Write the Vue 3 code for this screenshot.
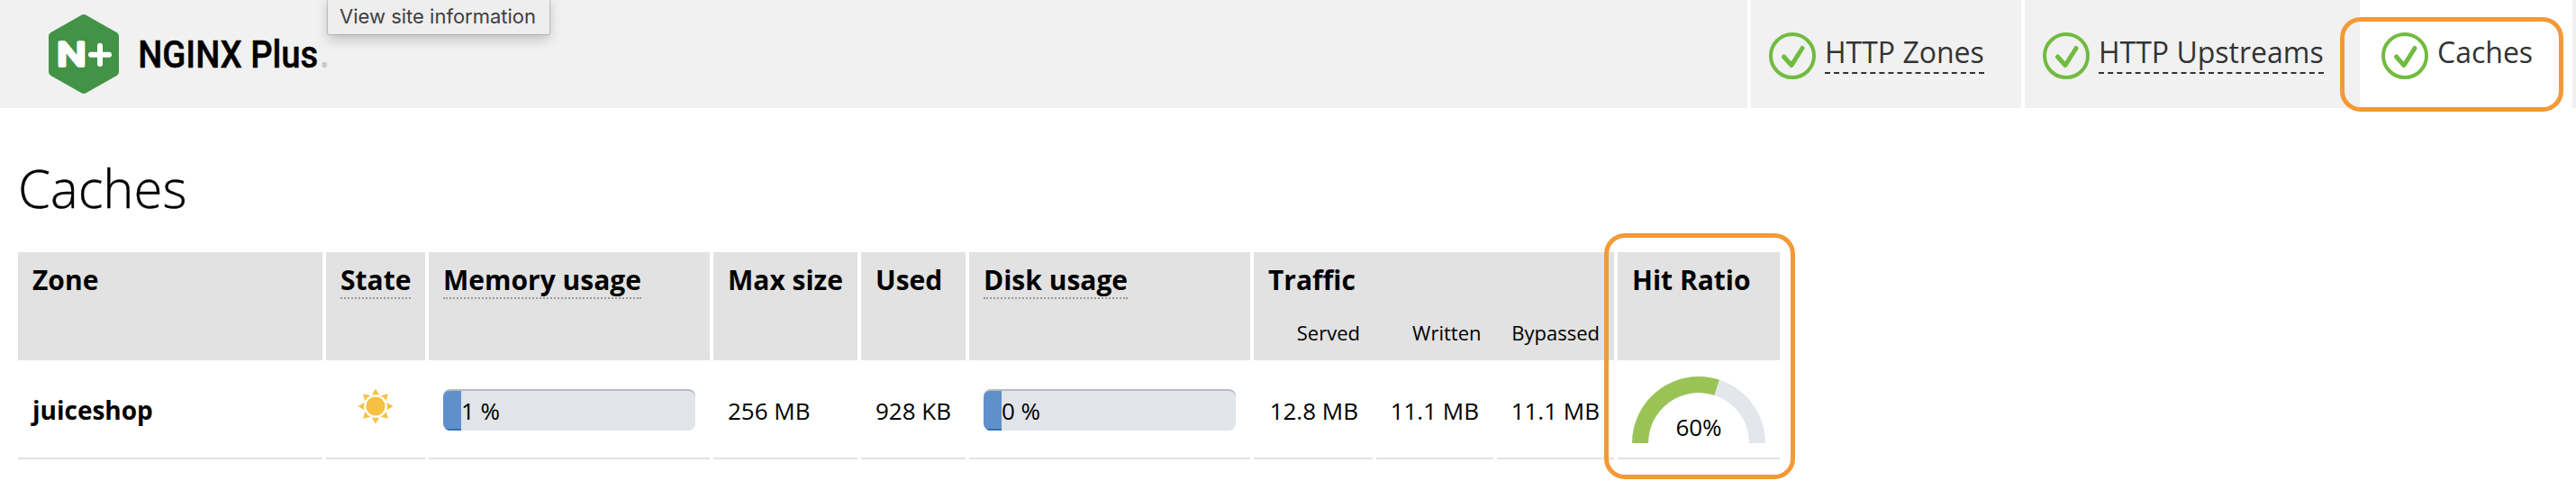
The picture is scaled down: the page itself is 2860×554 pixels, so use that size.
<script setup>
const tabs = [
  { label: 'HTTP Zones', kind: 'zones' },
  { label: 'HTTP Upstreams', kind: 'upstreams' },
  { label: 'Caches', kind: 'active' },
]
const rays = [0, 45, 90, 135, 180, 225, 270, 315]
const hitRatio = 60
const angle = Math.PI * (1 - hitRatio / 100)
const point = (r) => `${(74 + r * Math.cos(angle)).toFixed(2)} ${(74 - r * Math.sin(angle)).toFixed(2)}`
const arc = `M0 74A74 74 0 0 1 ${point(74)}L${point(56)}A56 56 0 0 0 18 74Z`
</script>

<template>
  <div class="page">
    <header class="bar">
      <div class="brand">
        <svg class="mark" width="78" height="88" viewBox="0 0 78 88">
          <path d="M36.500 0.700Q39 -0.500 41.500 0.700L75.500 20Q78 21.500 78 24V64Q78 66.500 75.500 68L41.500 87.300Q39 88.500 36.500 87.300L2.500 68Q0 66.500 0 64V24Q0 21.500 2.500 20Z" fill="#429345" />
          <text class="mark-letter" x="9" y="57" textLength="32.800" lengthAdjust="spacingAndGlyphs">N</text>
          <path d="M47 44.700H67M57 34.700V55" stroke="#fff" stroke-width="6" stroke-linecap="round" />
        </svg>
        <svg class="wordmark" width="230" height="60" viewBox="0 0 230 60">
          <text class="word" x="5.200" y="45" textLength="200" lengthAdjust="spacingAndGlyphs">NGINX Plus</text>
          <text class="reg" x="209" y="45">®</text>
        </svg>
      </div>
      <nav class="tabs">
        <a v-for="tab in tabs" :key="tab.label" class="tab" :class="tab.kind">
          <svg width="52" height="52" viewBox="0 0 52 52" fill="none" stroke="#71bb40">
            <circle cx="26" cy="26" r="24" stroke-width="4" />
            <path d="M16.500 27L25 36.500L37 17.500" stroke-width="5" stroke-linecap="round" stroke-linejoin="round" />
          </svg>
          <span class="tab-label">{{ tab.label }}</span>
        </a>
      </nav>
    </header>
    <div class="tooltip">View site information</div>
    <h1>Caches</h1>
    <div class="table">
      <div class="th">Zone</div>
      <div class="th"><span class="hint">State</span></div>
      <div class="th"><span class="hint">Memory usage</span></div>
      <div class="th">Max size</div>
      <div class="th">Used</div>
      <div class="th"><span class="hint">Disk usage</span></div>
      <div class="th traffic">
        <div>Traffic</div>
        <div class="sub"><span>Served</span><span>Written</span><span>Bypassed</span></div>
      </div>
      <div class="th">Hit Ratio</div>

      <div class="td name">juiceshop</div>
      <div class="td state">
        <svg width="40" height="40" viewBox="-20 -20 40 40" fill="#f6c143">
          <circle r="10.600" />
          <path v-for="r in rays" :key="r" d="M0 -19.600L4.300 -12.300Q0 -13.800 -4.300 -12.300Z" :transform="`rotate(${r})`" />
        </svg>
      </div>
      <div class="td meter"><div class="track"><div class="fill"></div><span>1 %</span></div></div>
      <div class="td">256 MB</div>
      <div class="td">928 KB</div>
      <div class="td meter"><div class="track"><div class="fill"></div><span>0 %</span></div></div>
      <div class="td num">12.8 MB</div>
      <div class="td num">11.1 MB</div>
      <div class="td num">11.1 MB</div>
      <div class="td ratio">
        <svg width="148" height="74" viewBox="0 0 148 74">
          <path d="M0 74A74 74 0 0 1 148 74H130A56 56 0 0 0 18 74Z" fill="#e3e6eb" />
          <path :d="arc" fill="#9ac356" />
          <text x="74" y="66" text-anchor="middle" class="ratio-text">{{ hitRatio }}%</text>
        </svg>
      </div>
    </div>
    <div class="callout callout-tab"></div>
    <div class="callout callout-ratio"></div>
  </div>
</template>

<style>
body { margin: 0; background: #fff; }
</style>

<style scoped>
.page {
  position: relative;
  width: 2860px;
  height: 554px;
  overflow: hidden;
  background: #fff;
  color: #000;
  font-family: "Open Sans", "Noto Sans", sans-serif;
}
.bar {
  display: flex;
  justify-content: space-between;
  height: 120px;
  background: #f1f1f1;
}
.brand { display: flex; align-items: flex-start; padding: 16px 0 0 54px; }
.wordmark { margin: 14px 0 0 16px; overflow: visible; }
.mark-letter {
  font: 400 36.500px Roboto, sans-serif;
  fill: #fff;
  stroke: #fff;
  stroke-width: 3.600px;
  stroke-linejoin: round;
}
.word { font: 500 42px Roboto, sans-serif; fill: #000; stroke: #000; stroke-width: 0.5px; }
.reg { font: 8px Roboto, sans-serif; fill: #999; }
.tabs { display: flex; padding-right: 4px; }
.tab {
  box-sizing: border-box;
  display: flex;
  align-items: flex-start;
  gap: 10px;
  height: 120px;
  padding: 36px 0 0 20px;
  border-left: 4px solid #fff;
}
.zones { width: 304px; }
.upstreams { width: 376px; }
.active { width: 236px; background: #fff; }
.tab-label {
  height: 44px;
  border-bottom: 2px dashed #333;
  color: #333;
  font-size: 32px;
  line-height: 43px;
  white-space: nowrap;
}
.active .tab-label { border-bottom: 0; }
.tooltip {
  position: absolute;
  top: -4px;
  left: 364px;
  box-sizing: border-box;
  width: 246px;
  height: 42px;
  padding-left: 13px;
  border-radius: 2px;
  background: #eee;
  box-shadow: 0 0 1px 1px rgba(0, 0, 0, 0.16), 0 6px 14px rgba(0, 0, 0, 0.2);
  color: #404040;
  font: 22px/44px Inter, sans-serif;
  white-space: nowrap;
}
h1 {
  margin: 50px 0 0 20px;
  height: 110px;
  font-size: 58px;
  font-weight: 300;
  line-height: 78px;
  -webkit-text-stroke: 0.4px #000;
}
.table {
  display: grid;
  grid-template-columns: 338px 110px 312px 160px 116px 312px 132px 130px 130px 180px;
  grid-template-rows: 120px 110px;
  column-gap: 4px;
  margin-left: 20px;
  width: max-content;
}
.th {
  padding: 10px 16px 0;
  background: #e2e2e2;
  font-size: 30px;
  font-weight: 700;
  line-height: 42px;
  white-space: nowrap;
}
.hint {
  display: inline-block;
  height: 40px;
  border-bottom: 2px dotted #999;
}
.traffic { grid-column: span 3; }
.sub {
  display: grid;
  grid-template-columns: 102px 134.500px 131.500px;
  margin-top: 21px;
  font-size: 22px;
  font-weight: 400;
  line-height: 32px;
}
.sub span { display: flex; justify-content: flex-end; }
.td {
  box-sizing: border-box;
  padding: 38px 16px 0;
  border-bottom: 2px solid #e2e2e2;
  font-size: 26px;
  line-height: 36px;
  white-space: nowrap;
}
.name { padding-top: 37px; font-size: 28px; font-weight: 700; }
.num { display: flex; justify-content: flex-end; }
.state { padding: 31px 0 0 35px; }
.state svg, .ratio svg { display: block; }
.meter { padding-top: 32px; }
.track {
  display: flex;
  height: 46px;
  overflow: hidden;
  border-radius: 8px;
  background: #e1e4e9;
  box-shadow: inset 0 2px 0 #b9bbbf;
  line-height: 48px;
}
.fill {
  width: 20px;
  height: 44px;
  margin-top: 2px;
  border-radius: 7px 0 0 0;
  background: #5f90cb;
  box-shadow: inset 0 -2px 0 #336fb2;
}
.ratio { padding-top: 18px; }
.ratio-text { font-size: 26px; }
.callout {
  position: absolute;
  box-sizing: border-box;
  border: 5px solid #f39936;
  border-radius: 23px;
}
.callout-tab { left: 2598px; top: 19px; width: 248px; height: 105px; }
.callout-ratio { left: 1781px; top: 259px; width: 212px; height: 273px; }
</style>
